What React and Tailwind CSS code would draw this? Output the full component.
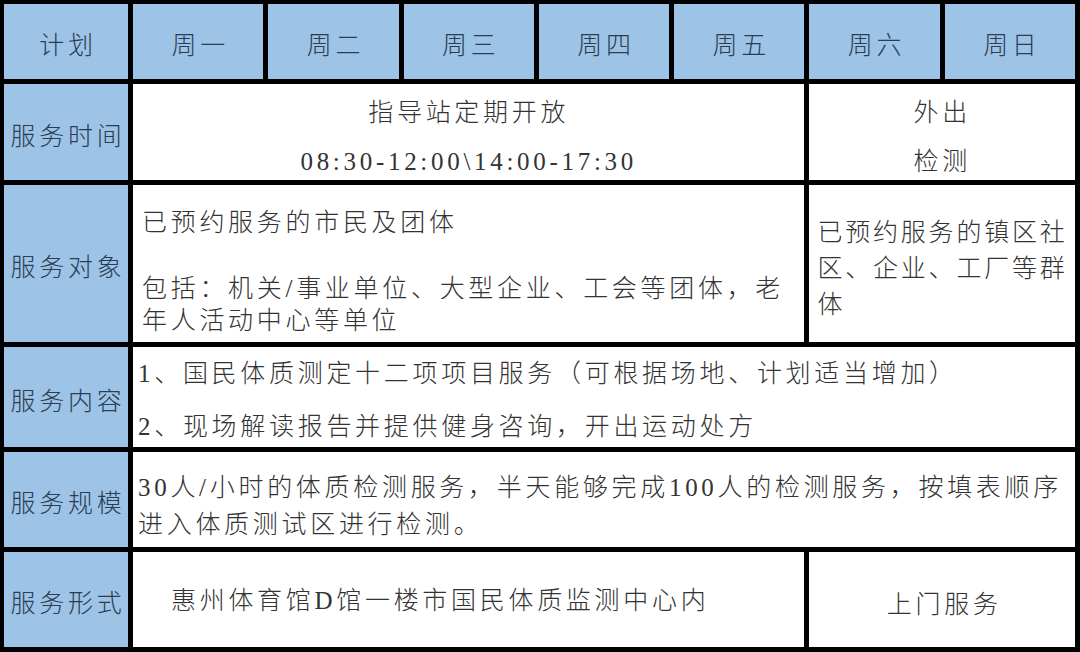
const days = ["周一", "周二", "周三", "周四", "周五", "周六", "周日"];

function Label({ children }) {
  return (
    <div className="bg-[#9dc3e6] flex items-center justify-center pt-[8px] pl-[4px] text-[#2a3d52] whitespace-nowrap">
      {children}
    </div>
  );
}

export default function App() {
  return (
    <div className="w-[1080px] h-[652px] bg-black pt-[4px] pl-[4px] pr-[5px] pb-[5px] grid grid-cols-[124px_repeat(7,1fr)] grid-rows-[75px_96px_157px_100px_95px_1fr] gap-[5px] font-['Liberation_Serif','Noto_Sans_CJK_SC',serif] font-light text-[25px] tracking-[3.7px] leading-none text-[#333333]">
      {/* header */}
      <div className="bg-[#9dc3e6] flex items-center justify-center pt-[8px] pl-[4px] text-[#2a3d52]">计划</div>
      {days.map((d) => (
        <div key={d} className="bg-[#9dc3e6] flex items-center justify-center pt-[8px] pl-[4px] text-[#2a3d52]">
          {d}
        </div>
      ))}

      {/* 服务时间 */}
      <Label>服务时间</Label>
      <div className="col-span-5 bg-white flex flex-col items-center justify-center pt-[10px] leading-[49px]">
        <div>指导站定期开放</div>
        <div>08:30-12:00\14:00-17:30</div>
      </div>
      <div className="col-span-2 bg-white flex flex-col items-center justify-center pt-[10px] leading-[49px]">
        <div>外出</div>
        <div>检测</div>
      </div>

      {/* 服务对象 */}
      <Label>服务对象</Label>
      <div className="col-span-5 bg-white pl-[9px] pt-[22px] leading-[32px] whitespace-nowrap overflow-hidden">
        <div>已预约服务的市民及团体</div>
        <div className="mt-[34px]">包括：机关/事业单位、大型企业、工会等团体，老</div>
        <div>年人活动中心等单位</div>
      </div>
      <div className="col-span-2 bg-white pl-[8px] flex flex-col justify-center pt-[10px] leading-[36px] tracking-[2.8px] whitespace-nowrap overflow-hidden">
        <div>已预约服务的镇区社</div>
        <div>区、企业、工厂等群</div>
        <div>体</div>
      </div>

      {/* 服务内容 */}
      <Label>服务内容</Label>
      <div className="col-span-7 bg-white pl-[5px] flex flex-col justify-center pt-[6px] leading-[53px] whitespace-nowrap overflow-hidden">
        <div>1、国民体质测定十二项项目服务（可根据场地、计划适当增加）</div>
        <div>2、现场解读报告并提供健身咨询，开出运动处方</div>
      </div>

      {/* 服务规模 */}
      <Label>服务规模</Label>
      <div className="col-span-7 bg-white pl-[5px] flex flex-col justify-center pt-[12px] leading-[37px] whitespace-nowrap overflow-hidden">
        <div>30人/小时的体质检测服务，半天能够完成100人的检测服务，按填表顺序</div>
        <div>进入体质测试区进行检测。</div>
      </div>

      {/* 服务形式 */}
      <Label>服务形式</Label>
      <div className="col-span-5 bg-white flex items-center pl-[38px] pt-[2px] whitespace-nowrap">
        惠州体育馆D馆一楼市国民体质监测中心内
      </div>
      <div className="col-span-2 bg-white flex items-center justify-center pt-[10px] pl-[4px] whitespace-nowrap">
        上门服务
      </div>
    </div>
  );
}
